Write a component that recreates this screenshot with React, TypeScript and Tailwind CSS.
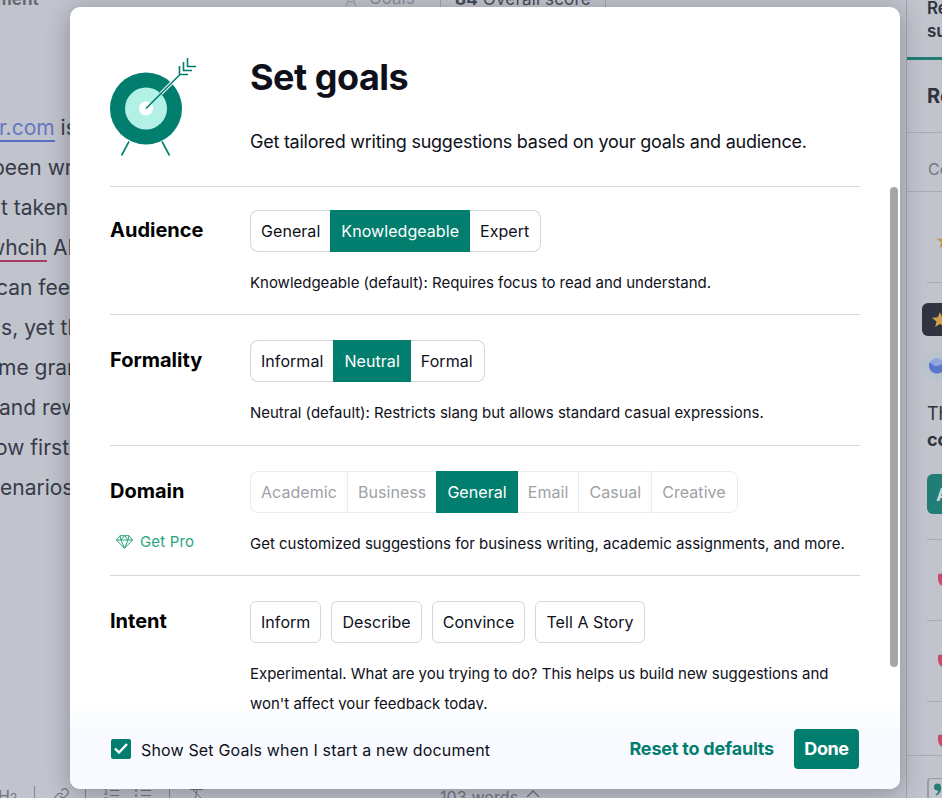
import clsx from 'clsx'

const lines = [
  { offset: '-ml-[1px]', before: 'r.com', text: ' is a', kind: 'link' },
  { offset: '-ml-[8px]', text: 'been wr' },
  { offset: 'ml-px', text: 't taken' },
  { offset: '-ml-[12px]', before: 'whcih', text: ' AI', kind: 'typo' },
  { offset: '-ml-[4px]', text: 'can feel' },
  { offset: '-ml-[4px]', text: 'ls, yet th' },
  { offset: '-ml-[2px]', text: 'me gram' },
  { offset: '-ml-[1px]', text: 'and rew' },
  { offset: '-ml-[5px]', text: 'ow first-' },
  { offset: 'ml-0', text: 'enarios' },
]

const goals = [
  {
    name: 'Audience',
    row: 'h-[128px] pt-[23px]',
    options: ['General', 'Knowledgeable', 'Expert'],
    active: 'Knowledgeable',
    text: 'Knowledgeable (default): Requires focus to read and understand.',
  },
  {
    name: 'Formality',
    row: 'h-[131px] pt-[25px]',
    options: ['Informal', 'Neutral', 'Formal'],
    active: 'Neutral',
    text: 'Neutral (default): Restricts slang but allows standard casual expressions.',
  },
  {
    name: 'Domain',
    row: 'h-[130px] pt-[25px]',
    options: ['Academic', 'Business', 'General', 'Email', 'Casual', 'Creative'],
    active: 'General',
    pro: true,
    text: 'Get customized suggestions for business writing, academic assignments, and more.',
  },
]

const intents = ['Inform', 'Describe', 'Convince', 'Tell A Story']

function TargetIcon() {
  return (
    <svg width="88" height="101" viewBox="0 0 88 101" fill="none" className="shrink-0">
      <circle cx="36" cy="51.5" r="36" fill="#027e6f" />
      <circle cx="36" cy="51.5" r="21" fill="#b3f0e6" />
      <circle cx="36" cy="51.5" r="7" fill="#fff" />
      <path d="M51 36.5 62 25.5" stroke="#fff" strokeWidth="3.6" />
      <path
        d="M36 51.5 69.500 18M69.500 9v8.500h8.500M73.500 5v8.500h8.500M77.500 1v8.500h8.500M19 84.500 11.500 98.500M52 84.500 59.500 98.500"
        stroke="#027e6f"
        strokeWidth="1.600"
      />
    </svg>
  )
}

function Diamond() {
  return (
    <svg width="17" height="14" viewBox="0 0 17 14" fill="none" stroke="#2aa57f" strokeWidth="1" strokeLinejoin="round">
      <path d="M4 .7h9l3.500 4.300-8 8.300L.5 5zM.5 5h16M4 .7 5 5l3.500 8.300L12 5l1-4.300M5 5l3.500-4.300L12 5" />
    </svg>
  )
}

function Shield() {
  return (
    <svg width="14" height="16" viewBox="0 0 14 16" className="shrink-0" fill="#c84a6a">
      <path d="M0 3.500C0 2.200 1 1.800 2.500 1.800 4.500 1.800 6 .5 7 .5s2.500 1.300 4.500 1.300c1.500 0 2.500.4 2.500 1.700V7c0 5-4 7.500-7 8.500C4 14.500 0 12 0 7z" />
    </svg>
  )
}

function Segments({ options, active, pro }: { options: string[]; active: string; pro?: boolean }) {
  return (
    <div className="flex h-[42px] w-fit text-[16px] tracking-[0.06px]">
      {options.map((option, i) => (
        <div
          key={option}
          className={clsx(
            'flex items-center border-y px-[10px] whitespace-nowrap',
            option === active ? 'border-[#027e6f] bg-[#027e6f] px-[11px] text-white' : pro ? 'border-[#ececee] text-[#a0a1a5]' : 'border-[#d5d6d9] text-[#0e101a]',
            i === 0 && 'rounded-l-lg border-l',
            i === options.length - 1 && 'rounded-r-lg border-r pr-[11px]',
            i > 0 && option !== active && options[i - 1] !== active && 'border-l'
          )}
        >
          {option}
        </div>
      ))}
    </div>
  )
}

function Sidebar() {
  return (
    <aside className="h-full w-[36px] shrink-0 overflow-hidden border-l border-[#a3a6b0] whitespace-nowrap text-[#30323d]">
      <div className="flex h-[60px] flex-col border-b-[3px] border-[#217d75] pl-[20px] text-[17px] leading-[23px] font-semibold">
        <div className="-mt-[3px]">Review</div>
        <div>suggestions</div>
      </div>
      <div className="flex h-[73px] items-center border-b border-[#a8abb5] pl-[20px] text-[20px] font-bold">Review</div>
      <div className="flex h-[59px] items-center border-b border-[#a8abb5] pt-[13px] pl-[21px] text-[16px] text-[#737681]">Correctness</div>
      <div className="ml-[20px] flex h-[91px] items-center border-b border-[#a8abb5] pt-[9px] pl-[8px] text-[18px] text-[#bd9445]">★</div>
      <div className="mt-[20px] ml-[15px] flex h-[33px] w-[40px] items-center rounded-md bg-[#303441] pl-[10px]">
        <svg width="20" height="20" viewBox="0 0 20 20" className="shrink-0" fill="#d0a052">
          <path d="m8 2 2.200 5.300 5.800.4-4.500 3.700 1.400 5.600L8 14l-4.900 3 1.400-5.600L0 7.700l5.800-.4z" />
        </svg>
      </div>
      <div className="mt-[15px] ml-[15px] flex h-[30px] w-[30px] items-center justify-center rounded-full bg-[#b9c3ce]">
        <svg width="18" height="18" viewBox="0 0 18 18" className="shrink-0">
          <circle cx="9" cy="9" r="8" fill="#91a6dc" />
          <path d="M1 6c3-1 4 4 8 3s5-3 8-1a8 8 0 0 1-16 1z" fill="#5876cb" />
        </svg>
      </div>
      <div className="mt-[20px] ml-[20px] text-[18px] leading-[26px]">
        <div>This text</div>
        <div className="font-bold">could be</div>
      </div>
      <div className="mt-[21px] ml-[20px] flex h-[40px] items-center rounded-l-md bg-[#217d75] pl-[9px] text-[18px] font-bold text-[#c8d8da]">Accept</div>
      <div className="mt-[25px] ml-[20px] flex flex-col">
        <div className="flex h-[81px] items-center border-t border-[#a8abb5] pl-[11px]">
          <Shield />
        </div>
        <div className="flex h-[81px] items-center border-t border-[#a8abb5] pl-[11px]">
          <Shield />
        </div>
        <div className="flex h-[54px] items-end border-t border-[#a8abb5] pb-[6px] pl-[11px]">
          <Shield />
        </div>
      </div>
      <div className="h-[43px] border-t border-[#a8abb5] pt-[22px] pl-[20px]">
        <div className="h-[30px] rounded-tl border-t border-l-2 border-[#979ba6] pt-[4px] pl-[5px]">
          <svg width="8" height="13" viewBox="0 0 8 13" fill="#217d75">
            <circle cx="3.500" cy="4" r="3.500" />
            <path d="M7 4c.4 4-1.500 7.500-5 8.500l-.6-1C3.500 10.500 4.300 9 4 7z" />
          </svg>
        </div>
      </div>
    </aside>
  )
}

function Editor() {
  return (
    <main className="flex h-full min-w-0 flex-1 flex-col overflow-hidden text-[#383b49]">
      <div className="flex h-[7px] items-end text-[#484b56]">
        <div className="-ml-[47px] w-[391px] text-[17px] leading-[15px] font-bold text-[#686b75]">Document</div>
        <div className="flex w-[96px] items-center gap-[11px] text-[17px] leading-[17px] text-[#8b8e98]">
          <svg width="14" height="17" viewBox="0 0 14 17" fill="none" stroke="currentColor">
            <circle cx="7" cy="7" r="5" />
            <circle cx="7" cy="7" r="2" />
            <path d="m4 12-2 4M10 12l2 4" />
          </svg>
          Goals
        </div>
        <div className="h-[7px] w-[166px] border-x border-[#a2a5ae]">
          <div className="-mt-[14px] pl-[14px] text-[17px] leading-[26px] tracking-[0.15px] whitespace-nowrap">
            <b>84</b> Overall score
          </div>
        </div>
      </div>
      <div className="mt-[101px] flex-1 text-[21px] leading-[40px] whitespace-pre">
        {lines.map((line) => (
          <div key={line.text} className={line.offset}>
            {line.before && (
              <span className={line.kind === 'link' ? 'border-b-2 border-[#5b70c3] text-[#6577c0]' : 'border-b-2 border-[#a83c63]'}>{line.before}</span>
            )}
            {line.text}
          </div>
        ))}
      </div>
      <div className="flex h-[12px] items-start text-[16px] leading-[20px] text-[#737681]">
        <div className="-ml-[2px] w-[36px]">H<span className="text-[12px]">2</span></div>
        <div className="h-[12px] w-[51px] border-l border-[#858893] pl-[18px]">
          <svg width="17" height="17" viewBox="0 0 24 24" fill="none" stroke="currentColor" strokeWidth="1.7" className="mt-[1px]">
            <path d="M10 13a5 5 0 0 0 7.500.5l3-3a5 5 0 0 0-7-7l-1.800 1.700M14 11a5 5 0 0 0-7.500-.5l-3 3a5 5 0 0 0 7 7l1.700-1.700" />
          </svg>
        </div>
        <div className="h-[12px] w-[84px] border-l border-[#858893] pl-[17px]">
          <svg width="50" height="14" viewBox="0 0 50 14" fill="none" stroke="currentColor">
            <path d="M1 3l2-1v6M1 8h4M7 4.500h9M7 9.500h9M38 4.500h10M38 9.500h10M1 12h4" />
            <path d="M32 4.500h2M32 9.500h2" strokeWidth="2" />
          </svg>
        </div>
        <div className="h-[12px] w-[271px] border-l border-[#858893] pl-[19px]">
          <svg width="15" height="14" viewBox="0 0 15 14" fill="none" stroke="currentColor">
            <path d="M1 3.500h13M8 4 6 14M2 2l11 11" />
          </svg>
        </div>
        <div className="flex gap-[8px] pt-[1px] tracking-[0.1px]">
          103 words
          <svg width="14" height="14" viewBox="0 0 14 14" fill="none" stroke="currentColor" strokeWidth="1.300">
            <path d="m1 10 6-6 6 6" />
          </svg>
        </div>
      </div>
    </main>
  )
}

function GoalsDialog() {
  return (
    <div className="absolute top-[7px] left-[70px] flex h-[782px] w-[830px] flex-col overflow-hidden rounded-[10px] bg-white text-[#0e101a] shadow-[0_4px_24px_rgba(14,16,26,0.3)]">
      <header className="mx-[40px] flex h-[179px] shrink-0 pt-[50px]">
        <TargetIcon />
        <div className="-mt-px ml-[52px]">
          <h1 className="text-[36px] leading-[42px] font-bold tracking-[-0.5px]">Set goals</h1>
          <p className="mt-[31px] text-[18px] leading-[26px] tracking-[-0.25px]">Get tailored writing suggestions based on your goals and audience.</p>
        </div>
      </header>
      <div className="flex h-[524px] shrink-0 overflow-hidden pl-[40px]">
        <div className="w-[750px]">
          {goals.map((goal) => (
            <section key={goal.name} className={clsx('flex border-t border-[#d5d6d9]', goal.row)}>
              <div className="w-[140px] shrink-0">
                <h2 className="mt-[6px] text-[20px] leading-[28px] font-bold text-black">{goal.name}</h2>
                {goal.pro && (
                  <div className="mt-[25px] ml-[6px] flex items-center gap-[7px] text-[15px] leading-[24px] tracking-[0.15px] text-[#2aa57f]">
                    <Diamond />
                    Get Pro
                  </div>
                )}
              </div>
              <div>
                <Segments options={goal.options} active={goal.active} pro={goal.pro} />
                <p className="mt-[16px] text-[15px] leading-[30px] tracking-[-0.015px]">{goal.text}</p>
              </div>
            </section>
          ))}
          <section className="flex border-t border-[#d5d6d9] pt-[25px]">
            <h2 className="mt-[6px] w-[140px] shrink-0 text-[20px] leading-[28px] font-bold text-black">Intent</h2>
            <div>
              <div className="flex gap-[10px]">
                {intents.map((intent) => (
                  <button key={intent} className="h-[42px] rounded-md border border-[#d5d6d9] px-[10px] text-[16px] tracking-[0.06px]">{intent}</button>
                ))}
              </div>
              <p className="mt-[16px] text-[15px] leading-[30px] tracking-[-0.015px]">
                Experimental. What are you trying to do? This helps us build new suggestions and
                <br />
                won't affect your feedback today.
              </p>
            </div>
          </section>
        </div>
        <div className="mt-px ml-[30px] h-[480px] w-[8px] rounded-full bg-[#a6a6a6]" />
      </div>
      <footer className="flex flex-1 items-center bg-linear-to-b from-[#fcfdff] to-[#f8faff] to-30% px-[41px] pb-[2px]">
        <div className="flex h-[20px] w-[20px] items-center justify-center rounded-[2px] bg-[#027e6f]">
          <svg width="14" height="11" viewBox="0 0 14 11" fill="none" stroke="#fff" strokeWidth="2.400">
            <path d="m1 5.500 4 4L13 1" />
          </svg>
        </div>
        <span className="ml-[10px] pt-[2px] text-[16px] tracking-[0.16px]">Show Set Goals when I start a new document</span>
        <button className="mr-[20px] ml-auto text-[18px] font-bold tracking-[-0.2px] text-[#027e6f]">Reset to defaults</button>
        <button className="h-[40px] w-[65px] rounded bg-[#027e6f] text-[18px] font-bold tracking-[-0.4px] text-white">Done</button>
      </footer>
    </div>
  )
}

export default function App() {
  return (
    <div className="relative flex h-[798px] w-[942px] overflow-hidden bg-[#c1c4cd] font-['Inter',sans-serif]">
      <Editor />
      <Sidebar />
      <GoalsDialog />
    </div>
  )
}
